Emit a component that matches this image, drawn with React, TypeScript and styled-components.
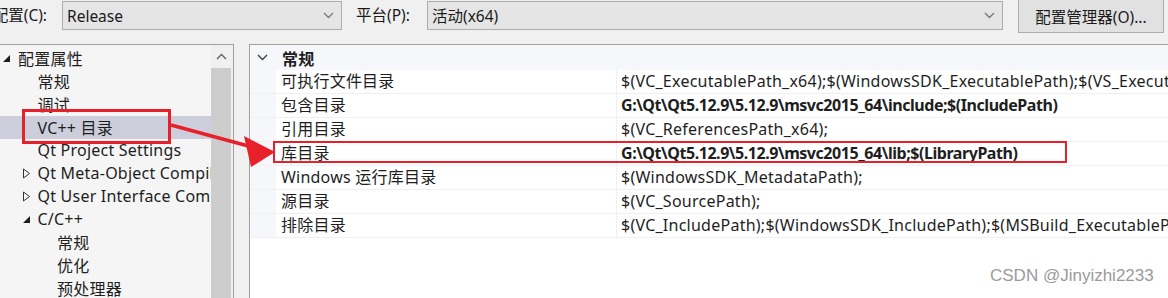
import React from 'react';
import styled, { createGlobalStyle } from 'styled-components';

const GlobalStyle = createGlobalStyle`
  html, body {
    margin: 0;
    padding: 0;
    background: #f0f0f0;
  }
  body {
    font-family: "Noto Sans", "Noto Sans CJK SC", sans-serif;
    color: #1e1e1e;
  }
`;

interface TreeNode {
  label: string;
  level: number;
  expander?: 'open' | 'closed';
  selected?: boolean;
}

interface PropRow {
  name: string;
  value: string;
  bold?: boolean;
}

const treeItems: TreeNode[] = [
  { label: '配置属性', level: 0, expander: 'open' },
  { label: '常规', level: 1 },
  { label: '调试', level: 1 },
  { label: 'VC++ 目录', level: 1, selected: true },
  { label: 'Qt Project Settings', level: 1 },
  { label: 'Qt Meta-Object Compiler', level: 1, expander: 'closed' },
  { label: 'Qt User Interface Compiler', level: 1, expander: 'closed' },
  { label: 'C/C++', level: 1, expander: 'open' },
  { label: '常规', level: 2 },
  { label: '优化', level: 2 },
  { label: '预处理器', level: 2 },
];

const propRows: PropRow[] = [
  {
    name: '可执行文件目录',
    value:
      '$(VC_ExecutablePath_x64);$(WindowsSDK_ExecutablePath);$(VS_ExecutablePath);$(MSBuild_ExecutablePath);$(FxCopDir);$(PATH);',
  },
  {
    name: '包含目录',
    value: 'G:\\Qt\\Qt5.12.9\\5.12.9\\msvc2015_64\\include;$(IncludePath)',
    bold: true,
  },
  { name: '引用目录', value: '$(VC_ReferencesPath_x64);' },
  {
    name: '库目录',
    value: 'G:\\Qt\\Qt5.12.9\\5.12.9\\msvc2015_64\\lib;$(LibraryPath)',
    bold: true,
  },
  { name: 'Windows 运行库目录', value: '$(WindowsSDK_MetadataPath);' },
  { name: '源目录', value: '$(VC_SourcePath);' },
  {
    name: '排除目录',
    value:
      '$(VC_IncludePath);$(WindowsSDK_IncludePath);$(MSBuild_ExecutablePath);$(VC_LibraryPath_x64);',
  },
];

const Chevron = ({ color = '#606060', up = false }: { color?: string; up?: boolean }) => (
  <svg width="11" height="7" viewBox="0 0 11 7">
    <path
      d={up ? 'M1 6 L5.5 1.5 L10 6' : 'M1 1 L5.5 5.5 L10 1'}
      fill="none"
      stroke={color}
      strokeWidth="1.4"
    />
  </svg>
);

const Expander = ({ state }: { state: 'open' | 'closed' }) =>
  state === 'open' ? (
    <svg width="9" height="9" viewBox="0 0 9 9">
      <path d="M8 1 L8 8 L1 8 Z" fill="#1e1e1e" />
    </svg>
  ) : (
    <svg width="9" height="11" viewBox="0 0 9 11">
      <path d="M1.5 1 L7.5 5.5 L1.5 10 Z" fill="none" stroke="#333" strokeWidth="1" />
    </svg>
  );

const App = () => {
  return (
    <Root>
      <GlobalStyle />
      <TopBar>
        <FieldLabel $width={62} $align="end">
          配置(C):
        </FieldLabel>
        <ComboBox $width={280}>
          <span>Release</span>
          <Chevron color="#7a7a7a" />
        </ComboBox>
        <FieldLabel $width={85} $align="start">
          平台(P):
        </FieldLabel>
        <ComboBox $width={576}>
          <span>活动(x64)</span>
          <Chevron color="#7a7a7a" />
        </ComboBox>
        <ManagerButton>配置管理器(O)...</ManagerButton>
      </TopBar>

      <Body>
        <TreePanel>
          <TreeList>
            {treeItems.map((item, i) => (
              <TreeRow key={i} $level={item.level} $selected={!!item.selected}>
                <ExpanderSlot>{item.expander && <Expander state={item.expander} />}</ExpanderSlot>
                <TreeLabel>{item.label}</TreeLabel>
              </TreeRow>
            ))}
          </TreeList>
          <ScrollBar>
            <ScrollArrow>
              <Chevron up color="#606060" />
            </ScrollArrow>
            <ScrollThumb />
          </ScrollBar>
        </TreePanel>

        <GridPanel>
          <GroupHeader>
            <GroupToggle>
              <Chevron color="#404040" />
            </GroupToggle>
            <GroupTitle>常规</GroupTitle>
          </GroupHeader>
          {propRows.map((row) => (
            <GridRow key={row.name}>
              <Gutter />
              <NameCell>{row.name}</NameCell>
              <ValueCell $bold={!!row.bold}>{row.value}</ValueCell>
            </GridRow>
          ))}
        </GridPanel>
      </Body>

      <TreeCallout />
      <RowCallout />
      <CalloutArrow width="1168" height="298" viewBox="0 0 1168 298">
        <line x1="171" y1="125" x2="252" y2="147" stroke="#e8202a" strokeWidth="3.5" />
        <path d="M275 152 L244 136 L251 167 Z" fill="#e8202a" />
      </CalloutArrow>
      <Watermark>CSDN @Jinyizhi2233</Watermark>
    </Root>
  );
};

export default App;

const Root = styled.div`
  position: relative;
  width: 1168px;
  height: 298px;
  overflow: hidden;
  background: #f0f0f0;
  font-size: 16px;
`;

const TopBar = styled.div`
  display: flex;
  align-items: flex-start;
  height: 44px;
  padding-top: 1px;
  box-sizing: border-box;
  font-size: 15.5px;
`;

const FieldLabel = styled.div<{ $width: number; $align: 'start' | 'end' }>`
  flex: none;
  display: flex;
  justify-content: ${({ $align }) => ($align === 'end' ? 'flex-end' : 'flex-start')};
  width: ${({ $width }) => $width}px;
  padding: ${({ $align }) => ($align === 'end' ? '0 15px 0 0' : '0 0 0 14px')};
  box-sizing: border-box;
  height: 29px;
  line-height: 29px;
  white-space: nowrap;
  color: #1a1a1a;
`;

const ComboBox = styled.div<{ $width: number }>`
  flex: none;
  display: flex;
  align-items: center;
  justify-content: space-between;
  width: ${({ $width }) => $width}px;
  height: 29px;
  box-sizing: border-box;
  padding: 0 7px 0 4px;
  background: #e5e5e5;
  border: 1px solid #adadad;
  color: #1a1a1a;
  white-space: nowrap;
`;

const ManagerButton = styled.div`
  flex: none;
  margin-left: 15px;
  margin-top: -2px;
  width: 146px;
  height: 34px;
  box-sizing: border-box;
  display: flex;
  align-items: center;
  justify-content: center;
  background: #e1e1e1;
  border: 1px solid #adadad;
  color: #1a1a1a;
  white-space: nowrap;
`;

const Body = styled.div`
  display: flex;
  height: 254px;
  letter-spacing: 0.22px;
`;

const TreePanel = styled.div`
  flex: none;
  display: flex;
  width: 234px;
  box-sizing: border-box;
  border-top: 1px solid #a0a0a0;
  border-right: 1px solid #a0a0a0;
  background: #f0f0f0;
`;

const TreeList = styled.div`
  width: 211px;
  padding-top: 1.5px;
  background: #f5f5f5;
  overflow: hidden;
`;

const TreeRow = styled.div<{ $level: number; $selected: boolean }>`
  display: flex;
  align-items: center;
  height: 23px;
  padding-left: ${({ $level }) => 2 + $level * 19.5}px;
  background: ${({ $selected }) => ($selected ? '#cccedb' : 'transparent')};
  white-space: nowrap;
`;

const ExpanderSlot = styled.span`
  flex: none;
  display: flex;
  align-items: center;
  width: 16px;
  height: 23px;
`;

const TreeLabel = styled.span`
  color: #1e1e1e;
`;

const ScrollBar = styled.div`
  width: 20px;
  margin-right: 2px;
  display: flex;
  flex-direction: column;
`;

const ScrollArrow = styled.div`
  height: 23px;
  display: flex;
  align-items: center;
  justify-content: center;
  background: #f0f0f0;
`;

const ScrollThumb = styled.div`
  flex: 1;
  background: #cdcdcd;
`;

const GridPanel = styled.div`
  flex: 1;
  margin-left: 15px;
  border-top: 1px solid #a0a0a0;
  border-left: 1px solid #a0a0a0;
  background: #ffffff;
  overflow: hidden;
`;

const GroupHeader = styled.div`
  display: flex;
  align-items: center;
  height: 25px;
  background: #f5f7fb;
`;

const GroupToggle = styled.span`
  display: flex;
  width: 32px;
  padding-left: 7px;
  box-sizing: border-box;
`;

const GroupTitle = styled.span`
  font-weight: 700;
  color: #1e1e1e;
`;

const GridRow = styled.div`
  display: flex;
  height: 24px;
  box-sizing: border-box;
  border-bottom: 1px solid #f0f0f0;
  white-space: nowrap;
`;

const Gutter = styled.div`
  flex: none;
  width: 26px;
  background: #f5f7fb;
`;

const NameCell = styled.div`
  flex: none;
  width: 341px;
  box-sizing: border-box;
  padding-left: 5px;
  line-height: 23px;
  border-right: 1px solid #f0f0f0;
`;

const ValueCell = styled.div<{ $bold: boolean }>`
  flex: 1;
  padding-left: 4px;
  line-height: 23px;
  font-weight: ${({ $bold }) => ($bold ? 700 : 400)};
  letter-spacing: ${({ $bold }) => ($bold ? '-0.45px' : '0.25px')};
  overflow: hidden;
`;

const TreeCallout = styled.div`
  position: absolute;
  left: 22px;
  top: 109px;
  width: 149px;
  height: 35px;
  box-sizing: border-box;
  border: 3px solid #e8202a;
  pointer-events: none;
`;

const RowCallout = styled.div`
  position: absolute;
  left: 273px;
  top: 141px;
  width: 794px;
  height: 22px;
  box-sizing: border-box;
  border: 2.5px solid #e8202a;
  pointer-events: none;
`;

const CalloutArrow = styled.svg`
  position: absolute;
  left: 0;
  top: 0;
  pointer-events: none;
`;

const Watermark = styled.div`
  position: absolute;
  left: 990px;
  top: 266px;
  font-family: "Liberation Sans", Arial, sans-serif;
  font-size: 17px;
  color: #9a9a9a;
  white-space: nowrap;
  pointer-events: none;
`;
